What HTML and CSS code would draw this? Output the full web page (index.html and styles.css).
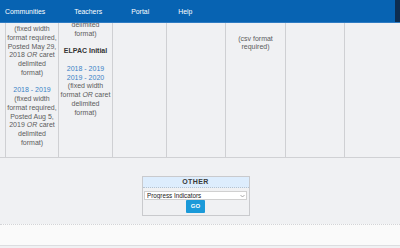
FILE: index.html
```html
<!DOCTYPE html>
<html lang="en">
<head>
<meta charset="utf-8">
<title>Downloads</title>
<link rel="stylesheet" href="styles.css">
</head>
<body>
<nav class="topnav">
  <a href="#">Communities</a>
  <a href="#">Teachers</a>
  <a href="#">Portal</a>
  <a href="#">Help</a>
  <span class="nav-edge"></span>
</nav>

<div class="grid">
  <div class="cell c0"></div>
  <div class="cell c1">
    (fixed width<br>format required,<br>Posted May 29,<br>2018 <i>OR</i> caret<br>delimited<br>format)<br><br>
    <a href="#">2018 - 2019</a><br>(fixed width<br>format required,<br>Posted Aug 5,<br>2019 <i>OR</i> caret<br>delimited<br>format)
  </div>
  <div class="cell c2">
    delimited<br>format)<br><br>
    <b>ELPAC Initial</b><br><br>
    <a href="#">2018 - 2019</a><br><a href="#">2019 - 2020</a><br>(fixed width<br>format <i>OR</i> caret<br>delimited<br>format)
  </div>
  <div class="cell c3"></div>
  <div class="cell c4"></div>
  <div class="cell c5">
    <a href="#" class="dl">2019 - 2020</a><br><br>(csv format<br>required)
  </div>
  <div class="cell c6"></div>
  <div class="cell c7"></div>
</div>

<div class="other-wrap">
  <div class="other">
    <div class="other-head">OTHER</div>
    <div class="other-body">
      <div class="select-wrap">
        <select class="select">
          <option>Progress Indicators</option>
        </select>
        <svg class="chev" width="5" height="4" viewBox="0 0 5 4"><path d="M0.5 1 L2.5 3 L4.5 1" fill="none" stroke="#888" stroke-width="0.7"/></svg>
      </div>
      <button class="go" type="button">GO</button>
    </div>
  </div>
</div>

<div class="band"></div>
</body>
</html>
```

FILE: styles.css
```css
html, body {
  margin: 0;
  padding: 0;
}
body {
  width: 400px;
  height: 248px;
  overflow: hidden;
  background: #f0f1f3;
  font-family: "Liberation Sans", Arial, sans-serif;
}

.topnav {
  position: fixed;
  top: 0;
  left: 0;
  right: 0;
  height: 22px;
  background: #0763b2;
  border-bottom: 1px solid #2f7cc3;
  display: flex;
  align-items: center;
  gap: 29px;
  padding-left: 5px;
  z-index: 2;
}
.topnav a {
  color: #ffffff;
  font-size: 6.9px;
  text-decoration: none;
}
.nav-edge {
  margin-left: auto;
  width: 5px;
  align-self: stretch;
  background: #0d2d50;
}

.grid {
  display: grid;
  grid-template-columns: 6px 53px 54px 54px 59px 60px 59px 1fr;
  border-bottom: 1px solid #d0d1d4;
}
.cell {
  border-right: 1px solid #cfd0d3;
  text-align: center;
  font-size: 7px;
  line-height: 8.75px;
  color: #5c5c5c;
  white-space: nowrap;
  overflow: hidden;
  padding-bottom: 9px;
}
.cell:last-child {
  border-right: none;
}
.cell a {
  color: #3a82c6;
  text-decoration: none;
}
.cell b {
  color: #333333;
}
.c1 { padding-top: 25px; }
.c2 { padding-top: 21px; }
.c5 { padding-top: 17px; }

.other-wrap {
  display: flex;
  justify-content: center;
  padding-right: 9px;
  margin-top: 18px;
}
.other {
  width: 106px;
  border: 1px solid #c9cacd;
  background: #f0f1f3;
}
.other-head {
  height: 10px;
  line-height: 10.5px;
  background: #ddedfd;
  border-bottom: 1px dotted #b7c3cf;
  text-align: center;
  font-size: 7px;
  font-weight: bold;
  letter-spacing: 0.4px;
  color: #3a3a3a;
}
.other-body {
  display: flex;
  flex-direction: column;
  align-items: center;
  padding: 3.5px 1px 2px;
}
.select-wrap {
  position: relative;
  width: 103px;
  height: 9px;
}
.select {
  appearance: none;
  -webkit-appearance: none;
  display: block;
  width: 100%;
  height: 9px;
  margin: 0;
  padding: 0 2px;
  border: 1px solid #d0d0d0;
  border-radius: 0;
  background: #ffffff;
  font-family: "Liberation Sans", Arial, sans-serif;
  font-size: 6.3px;
  line-height: 7px;
  color: #222222;
  box-sizing: border-box;
}
.chev {
  position: absolute;
  right: 2px;
  top: 3px;
}
.go {
  width: 19px;
  height: 12.5px;
  margin: 0;
  padding: 0;
  border: none;
  border-radius: 1px;
  background: #1b9ad9;
  color: #ffffff;
  font-family: "Liberation Sans", Arial, sans-serif;
  font-size: 6px;
  font-weight: bold;
}

.band {
  margin-top: 8px;
  height: 20px;
  background: #fafafa;
  border-top: 1px dotted #d3d4d7;
  border-bottom: 1px solid #dcdde0;
}
```
